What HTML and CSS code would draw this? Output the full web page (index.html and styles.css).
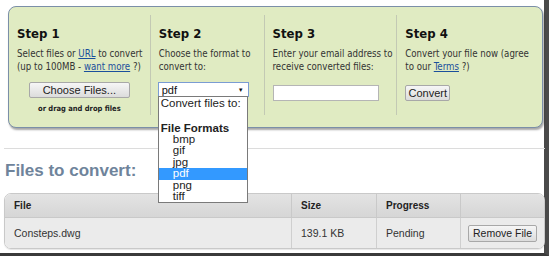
FILE: index.html
```html
<!DOCTYPE html>
<html lang="en">
<head>
    <meta charset="UTF-8">
    <title>File Converter</title>
    <link rel="stylesheet" href="styles.css">
</head>
<body>
    <div class="screen">
        <div class="steps">
            <div class="step step-1">
                <h2>Step 1</h2>
                <p>Select files or <a href="#">URL</a> to convert (up to 100MB - <a href="#">want more</a> ?)</p>
                <div class="center">
                    <button class="choose-btn">Choose Files...</button>
                    <div class="drag-note">or drag and drop files</div>
                </div>
            </div>
            <div class="step step-2">
                <h2>Step 2</h2>
                <p>Choose the format to convert to:</p>
                <div class="select-wrap">
                    <div class="fake-select">
                        <span>pdf</span>
                        <span class="arrow">&#9660;</span>
                    </div>
                    <ul class="select-list">
                        <li class="opt-head">Convert files to:</li>
                        <li class="opt-blank"></li>
                        <li class="opt-group">File Formats</li>
                        <li class="opt">bmp</li>
                        <li class="opt">gif</li>
                        <li class="opt">jpg</li>
                        <li class="opt selected">pdf</li>
                        <li class="opt">png</li>
                        <li class="opt">tiff</li>
                    </ul>
                </div>
            </div>
            <div class="step step-3">
                <h2>Step 3</h2>
                <p>Enter your email address to receive converted files:</p>
                <input type="text" class="email-input">
            </div>
            <div class="step step-4">
                <h2>Step 4</h2>
                <p>Convert your file now (agree to our <a href="#">Terms</a> ?)</p>
                <button class="convert-btn">Convert</button>
            </div>
        </div>

        <hr class="divider">

        <h3 class="files-title">Files to convert:</h3>

        <table class="files-table">
            <thead>
                <tr>
                    <th class="col-file">File</th>
                    <th class="col-size">Size</th>
                    <th class="col-progress">Progress</th>
                    <th class="col-action"></th>
                </tr>
            </thead>
            <tbody>
                <tr>
                    <td>Consteps.dwg</td>
                    <td>139.1 KB</td>
                    <td>Pending</td>
                    <td class="action"><button class="remove-btn">Remove File</button></td>
                </tr>
            </tbody>
        </table>
    </div>
</body>
</html>
```

FILE: styles.css
```css
/* Base */
* {
    margin: 0;
    padding: 0;
    box-sizing: border-box;
}

body {
    background-color: #fff;
    font-family: 'DejaVu Sans Condensed', 'DejaVu Sans', Verdana, sans-serif;
    overflow: hidden;
}

a {
    color: #1a4f9c;
}

/* Screenshot frame */
.screen {
    width: 549px;
    height: 256px;
    padding: 6px 0 0 0;
    border-right: 5px solid #4a4a4a;
    border-bottom: 3px solid #3a3a3a;
}

/* Steps panel */
.steps {
    display: flex;
    margin-left: 8px;
    width: 535px;
    height: 122px;
    background-color: #e0ebc2;
    border: 1px solid #7b8fa8;
    border-radius: 8px;
    box-shadow: 1px 2px 2px rgba(0, 0, 0, 0.35);
    padding: 8px 0 12px 0;
}

.step {
    padding: 0 4px 0 8px;
    border-right: 1px solid #c3c9b4;
}

.step-1 { width: 142px; }
.step-2 { width: 114px; }
.step-3 { width: 133px; padding-right: 1px; }
.step-4 { width: 145px; border-right: none; padding-right: 8px; }

.step h2 {
    font-size: 13px;
    font-weight: bold;
    color: #111;
    margin-top: 11px;
    margin-bottom: 6px;
    line-height: 16px;
}

.step p {
    font-size: 9.6px;
    line-height: 12.5px;
    color: #333;
    height: 25px;
    margin-bottom: 9px;
}

.center {
    display: flex;
    flex-direction: column;
    align-items: center;
    padding-right: 4px;
}

button {
    font-family: 'Liberation Sans', Arial, sans-serif;
    font-size: 11px;
    color: #222;
    background: linear-gradient(#f6f6f6, #dcdcdc);
    border: 1px solid #a8a8a8;
    border-radius: 2px;
    height: 16px;
    line-height: 14px;
    white-space: nowrap;
}

.choose-btn {
    width: 101px;
}

.drag-note {
    font-size: 7.5px;
    font-weight: bold;
    color: #222;
    margin-top: 6px;
}

/* Format select */
.select-wrap {
    position: relative;
    width: 91px;
    margin-left: -1px;
}

.fake-select {
    display: flex;
    justify-content: space-between;
    align-items: center;
    height: 15px;
    background: #fff;
    border: 1px solid #7a9cd3;
    padding: 0 4px 0 3px;
    font-family: 'Liberation Sans', Arial, sans-serif;
    font-size: 11px;
    color: #111;
}

.arrow {
    font-size: 6px;
}

.select-list {
    position: absolute;
    top: 14px;
    left: 0;
    width: 90px;
    list-style: none;
    background: #fff;
    border: 1px solid #7a7a7a;
    font-family: 'Liberation Sans', Arial, sans-serif;
    font-size: 11.5px;
    color: #222;
    z-index: 10;
}

.select-list li {
    height: 11.4px;
    line-height: 11px;
    padding-left: 2px;
}

.select-list .opt-blank {
    height: 11px;
}

.select-list .opt-head {
    height: 13px;
    line-height: 13px;
}

.select-list .opt-group {
    font-weight: bold;
    height: 13px;
    line-height: 14px;
}

.select-list .opt {
    padding-left: 14px;
}

.select-list .selected {
    background-color: #3399ff;
    color: #fff;
}

/* Email + convert */
.email-input {
    width: 106px;
    height: 16px;
    border: 1px solid #b5b5b5;
    background: #fff;
}

.convert-btn {
    width: 45px;
}

/* Files section */
.divider {
    border: none;
    border-top: 1px solid #dcdcdc;
    margin: 20px 0 0 4px;
    width: 541px;
}

.files-title {
    font-family: 'Liberation Sans', Arial, sans-serif;
    font-size: 17px;
    font-weight: bold;
    color: #6f849b;
    margin: 12px 0 0 5px;
}

.files-table {
    margin: 12px 0 0 4px;
    width: 541px;
    border-collapse: separate;
    border-spacing: 0;
    border: 1px solid #c9c9c9;
    border-radius: 7px;
    overflow: hidden;
    font-family: 'Liberation Sans', Arial, sans-serif;
    font-size: 10.5px;
    color: #333;
    box-shadow: 0 1px 1px rgba(0, 0, 0, 0.1);
}

.files-table th {
    text-align: left;
    font-weight: bold;
    font-size: 10px;
    height: 24px;
    padding: 0 9px;
    background: linear-gradient(#e3e3e3, #d6d6d6);
    border-bottom: 1px solid #c9c9c9;
    border-left: 1px solid #c9c9c9;
    color: #222;
}

.files-table td {
    height: 30px;
    padding: 0 9px;
    background: #ebebeb;
    border-left: 1px solid #cfcfcf;
}

.files-table th:first-child,
.files-table td:first-child {
    border-left: none;
}

.col-file { width: 286px; }
.col-size { width: 85px; }
.col-progress { width: 84px; }

.files-table td.action {
    text-align: center;
    padding: 0;
}

.remove-btn {
    height: 17px;
    padding: 0 4px;
    font-size: 10.5px;
}
```
